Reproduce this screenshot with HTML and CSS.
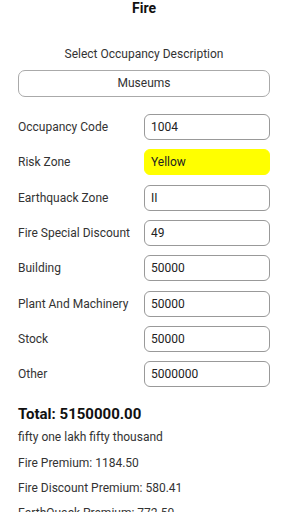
FILE: index.html
```html
<!DOCTYPE html>
<html lang="en">
<head>
    <meta charset="UTF-8">
    <meta name="viewport" content="width=device-width, initial-scale=1.0">
    <title>Fire</title>
    <link rel="stylesheet" href="styles.css">
</head>
<body>
<h1 class="title">Fire</h1>

<div class="select-label">Select Occupancy Description</div>
<div class="select-btn">Museums</div>

<div class="form">
    <div class="row">
        <span class="label">Occupancy Code</span>
        <div class="field">1004</div>
    </div>
    <div class="row">
        <span class="label">Risk Zone</span>
        <div class="field zone">Yellow</div>
    </div>
    <div class="row">
        <span class="label">Earthquack Zone</span>
        <div class="field">II</div>
    </div>
    <div class="row">
        <span class="label">Fire Special Discount</span>
        <div class="field">49</div>
    </div>
    <div class="row">
        <span class="label">Building</span>
        <div class="field">50000</div>
    </div>
    <div class="row">
        <span class="label">Plant And Machinery</span>
        <div class="field">50000</div>
    </div>
    <div class="row">
        <span class="label">Stock</span>
        <div class="field">50000</div>
    </div>
    <div class="row">
        <span class="label">Other</span>
        <div class="field">5000000</div>
    </div>
</div>

<div class="total">Total: 5150000.00</div>
<p class="line words">fifty one lakh fifty thousand</p>
<p class="line first">Fire Premium: 1184.50</p>
<p class="line">Fire Discount Premium: 580.41</p>
<p class="line">EarthQuack Premium: 772.50</p>
</body>
</html>
```

FILE: styles.css
```css
html, body {
    margin: 0;
    padding: 0;
    background: #fff;
}

body {
    padding: 0 18px;
    font-family: Roboto, "Liberation Sans", sans-serif;
    color: #333;
    overflow: hidden;
}

.title {
    margin: 0;
    font-size: 14px;
    line-height: 17px;
    font-weight: bold;
    color: #111;
    text-align: center;
}

.select-label {
    margin-top: 29px;
    font-size: 12px;
    line-height: 16px;
    text-align: center;
}

.select-btn {
    margin-top: 8px;
    height: 25px;
    border: 1px solid #aaa;
    border-radius: 7px;
    font-size: 12px;
    line-height: 25px;
    text-align: center;
}

.form {
    margin-top: 17px;
    display: flex;
    flex-direction: column;
    gap: 9.33px;
}

.row {
    display: flex;
    align-items: center;
    height: 26px;
}

.label {
    flex: 1;
    font-size: 12px;
}

.field {
    box-sizing: border-box;
    width: 126px;
    height: 26px;
    padding-left: 6px;
    border: 1px solid #999;
    border-radius: 6px;
    font-size: 12px;
    line-height: 24px;
    color: #222;
}

.field.zone {
    background: #ffff00;
    border-color: #ffff00;
}

.total {
    margin-top: 17px;
    font-size: 15px;
    line-height: 20px;
    font-weight: bold;
    color: #111;
}

.line {
    margin: 0;
    margin-top: 9px;
    font-size: 12px;
    line-height: 16px;
}

.words {
    margin-top: 5px;
}

.first {
    margin-top: 10px;
}
```
